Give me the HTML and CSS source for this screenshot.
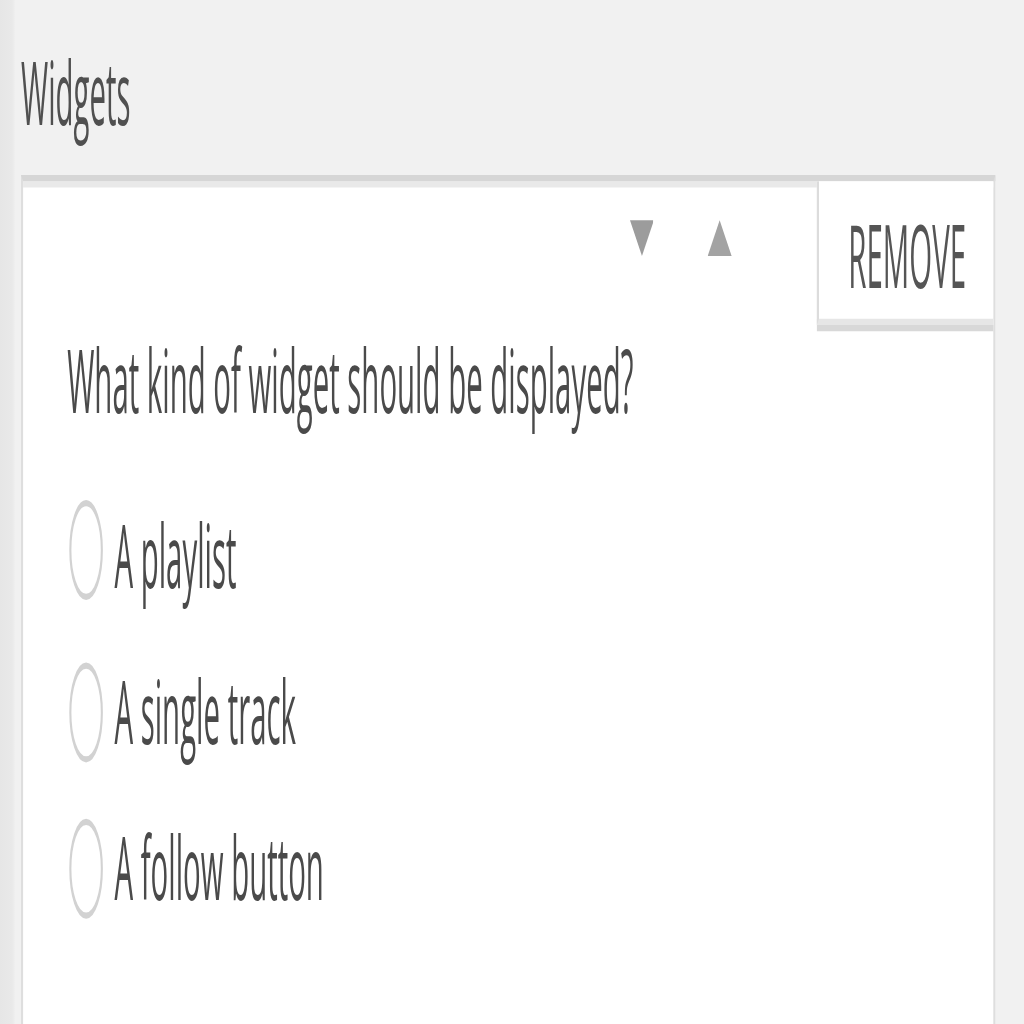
FILE: index.html
```html
<!DOCTYPE html>
<html lang="en">
<head>
<meta charset="utf-8">
<title>Widgets</title>
<link rel="stylesheet" href="styles.css">
</head>
<body>
<div class="stage">
  <div class="edge"></div>
  <div class="panel">
    <h3 class="panel-title">Widgets</h3>
    <div class="card">
      <div class="card-head">
        <div class="arrows">
          <button class="arrow" type="button" aria-label="Move down">
            <svg width="11.4" height="6.2" viewBox="0 0 12 6"><polygon points="0,0 12,0 6,6" fill="#9c9c9c"/></svg>
          </button>
          <button class="arrow" type="button" aria-label="Move up">
            <svg width="11.4" height="6.2" viewBox="0 0 12 6"><polygon points="6,0 12,6 0,6" fill="#a3a3a3"/></svg>
          </button>
        </div>
        <button class="remove" type="button">Remove</button>
      </div>
      <div class="card-body">
        <p class="question">What kind of widget should be displayed?</p>
        <label class="choice"><input type="radio" name="kind" class="radio"><span>A playlist</span></label>
        <label class="choice"><input type="radio" name="kind" class="radio"><span>A single track</span></label>
        <label class="choice"><input type="radio" name="kind" class="radio"><span>A follow button</span></label>
      </div>
    </div>
  </div>
</div>
</body>
</html>
```

FILE: styles.css
```css
html, body {
  margin: 0;
  padding: 0;
  background: #f1f1f1;
}

body {
  width: 1024px;
  height: 1024px;
  overflow: hidden;
}

.stage {
  width: 487.6px;
  height: 170px;
  transform: scale(2.1, 6.25);
  transform-origin: 0 0;
  display: flex;
  font-family: "Open Sans", "Liberation Sans", sans-serif;
  font-size: 14px;
  color: #4a4a4a;
}

.edge {
  flex: 0 0 7px;
  background: linear-gradient(to right, #e6e6e6, #e9e9e9 80%, #eeeeee);
}

.panel {
  flex: 1;
  padding: 5px 0 0 3px;
}

.panel-title {
  margin: 0 0 4px 0;
  font-size: 14px;
  font-weight: 400;
  line-height: 19px;
  color: #505050;
}

.card {
  width: 464px;
  box-sizing: border-box;
  height: 142px;
  background: #fff;
  border: 1px solid #dedede;
  border-top-color: #d6d6d6;
  border-bottom: 0;
  box-shadow: inset 0 1px 0 #e9e9e9;
}

.card-head {
  height: 21px;
  display: flex;
  align-items: flex-start;
}

.arrows {
  margin-left: auto;
  margin-right: 27px;
  display: flex;
  padding-top: 5.5px;
}

.arrow {
  width: 37.7px;
  height: 6.2px;
  padding: 0;
  margin: 0;
  border: 0;
  background: none;
  display: flex;
  justify-content: center;
  align-items: flex-start;
}

.arrow svg {
  display: block;
}

.remove {
  height: 23px;
  margin: 0;
  padding: 0.7px 13px 0 14px;
  background: #fff;
  border: 0;
  border-left: 1px solid #dcdcdc;
  border-bottom: 1px solid #e6e6e6;
  box-shadow: 0 1px 0 #d8d8d8;
  font-family: inherit;
  font-size: 14px;
  line-height: 22px;
  text-transform: uppercase;
  color: #555;
  position: relative;
  z-index: 1;
}

.card-body {
  padding: 0 0 0 21px;
}

.question {
  margin: 1px 0 5.6px 0;
  line-height: 19px;
  color: #4a4a4a;
}

.choice {
  height: 25.3px;
  display: flex;
  align-items: center;
  line-height: 19px;
  color: #4a4a4a;
}

.radio {
  -webkit-appearance: none;
  appearance: none;
  width: 16px;
  height: 16px;
  margin: 0 6px 0 0.5px;
  box-sizing: border-box;
  border: 1px solid #d2d2d2;
  border-radius: 50%;
  background: #fff;
  flex: 0 0 auto;
}
```
